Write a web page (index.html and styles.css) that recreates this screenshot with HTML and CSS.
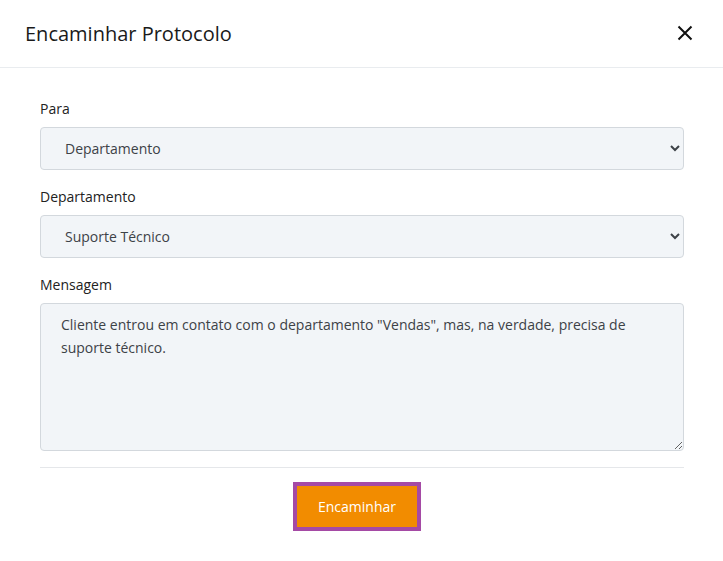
FILE: index.html
```html
<!DOCTYPE html>
<html lang="pt">
<head>
<meta charset="utf-8">
<title>Encaminhar Protocolo</title>
<link rel="stylesheet" href="styles.css">
</head>
<body>
<div class="modal">
  <div class="modal-header">
    <h1 class="modal-title">Encaminhar Protocolo</h1>
    <button class="close" type="button" aria-label="Fechar">
      <svg width="16" height="16" viewBox="0 0 16 16"><path d="M1.5 1.5 L14.5 14.5 M14.5 1.5 L1.5 14.5" stroke="#111" stroke-width="2" fill="none"/></svg>
    </button>
  </div>
  <div class="modal-body">
    <div class="field">
      <label class="label" for="para">Para</label>
      <select id="para" class="control">
        <option>Departamento</option>
      </select>
    </div>
    <div class="field">
      <label class="label" for="dep">Departamento</label>
      <select id="dep" class="control">
        <option>Suporte Técnico</option>
      </select>
    </div>
    <div class="field">
      <label class="label" for="msg">Mensagem</label>
      <textarea id="msg" class="control textarea">Cliente entrou em contato com o departamento "Vendas", mas, na verdade, precisa de suporte técnico.</textarea>
    </div>
    <div class="footer">
      <button class="btn" type="button">Encaminhar</button>
    </div>
  </div>
</div>
</body>
</html>
```

FILE: styles.css
```css
html, body {
  margin: 0;
  padding: 0;
  background: #ffffff;
}
body {
  font-family: "Open Sans", "Noto Sans", sans-serif;
  color: #212529;
  font-size: 14px;
}
.modal {
  width: 723px;
}
.modal-header {
  height: 68px;
  border-bottom: 1px solid #e9ecef;
  display: flex;
  align-items: center;
  justify-content: space-between;
  padding: 0 30px 1px 25px;
  box-sizing: border-box;
}
.modal-title {
  margin: 0;
  font-size: 20px;
  font-weight: 400;
  color: #1a1a1a;
}
.close {
  border: 0;
  background: none;
  padding: 0;
  width: 16px;
  height: 16px;
  display: flex;
  cursor: pointer;
}
.modal-body {
  padding: 30px 39px 0 40px;
}
.field {
  display: flex;
  flex-direction: column;
  margin-bottom: 16px;
}
.label {
  font-size: 14px;
  line-height: 21px;
  margin-bottom: 8px;
  color: #222;
}
.control {
  box-sizing: border-box;
  width: 100%;
  height: 43px;
  border: 1px solid #d3d8dd;
  border-radius: 4px;
  background-color: #f2f5f8;
  color: #3d4247;
  font-family: "Open Sans", "Noto Sans", sans-serif;
  font-size: 14px;
  padding: 0 14px 0 20px;
}
.textarea {
  height: 148px;
  padding: 9px 20px;
  line-height: 23px;
  resize: vertical;
  display: block;
}
.footer {
  border-top: 1px solid #e5e7ea;
  display: flex;
  justify-content: center;
  padding: 14px 10px 0 0;
}
.btn {
  box-sizing: content-box;
  background: #f28c00;
  color: #ffffff;
  border: 4px solid #a54aa5;
  width: 120px;
  height: 41px;
  font-family: "Open Sans", "Noto Sans", sans-serif;
  font-size: 14px;
  padding: 0;
  margin: 0;
}
```
